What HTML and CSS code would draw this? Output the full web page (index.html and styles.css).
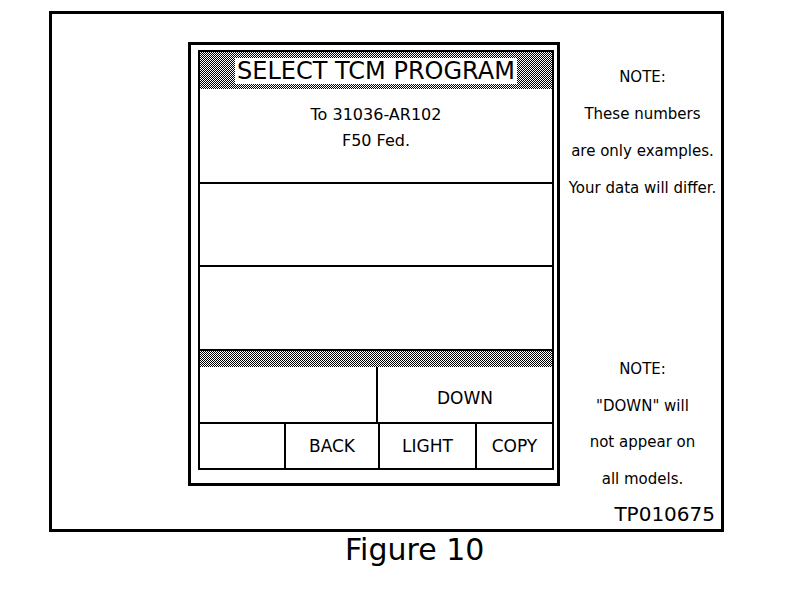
FILE: index.html
```html
<!DOCTYPE html>
<html lang="en">
<head>
  <meta charset="UTF-8">
  <title>Figure 10</title>
  <link rel="stylesheet" href="styles.css">
</head>
<body>

  <div class="frame">
    <div class="device">
      <div class="panel">
        <div class="header"><span class="title">SELECT TCM PROGRAM</span></div>
        <div class="row row-1">
          <div>To 31036-AR102</div>
          <div>F50 Fed.</div>
        </div>
        <div class="row row-2"></div>
        <div class="row row-3"></div>
        <div class="bar"></div>
        <div class="keys keys-top">
          <div class="key"></div>
          <div class="key">DOWN</div>
        </div>
        <div class="keys keys-bottom">
          <div class="key"></div>
          <div class="key">BACK</div>
          <div class="key">LIGHT</div>
          <div class="key">COPY</div>
        </div>
      </div>
    </div>

    <div class="notes">
      <div class="note note-first">
        <div>NOTE:</div>
        <div>These numbers</div>
        <div>are only examples.</div>
        <div>Your data will differ.</div>
      </div>
      <div class="note note-second">
        <div>NOTE:</div>
        <div>"DOWN" will</div>
        <div>not appear on</div>
        <div>all models.</div>
      </div>
      <div class="code">TP010675</div>
    </div>
  </div>

  <div class="caption">Figure 10</div>

</body>
</html>
```

FILE: styles.css
```css
body {
  margin: 0;
  font-family: "DejaVu Sans", sans-serif;
  background-color: white;
  color: black;
}

.frame {
  margin: 11px 0 0 49px;
  width: 669px;
  height: 515px;
  border: 3px solid black;
  display: flex;
}

.device {
  margin: 28px 0 0 136px;
  width: 356px;
  height: 420px;
  flex-shrink: 0;
  border: 3px solid black;
  padding: 5px 3px 13px 7px;
  display: flex;
}

.panel {
  flex: 1;
  border: 2px solid black;
  display: flex;
  flex-direction: column;
}

.header,
.bar {
  background: repeating-conic-gradient(#000 0 25%, #fff 0 50%) 0 0 / 2px 2px;
}

.header {
  height: 37px;
  display: flex;
  align-items: center;
  justify-content: center;
}

.title {
  background-color: white;
  font-size: 24px;
  line-height: 24px;
  padding: 1px 2px;
}

.row {
  border-bottom: 2px solid black;
  box-sizing: border-box;
}

.row-1 {
  height: 95px;
  padding-top: 13px;
  text-align: center;
  font-size: 16px;
  line-height: 26px;
}

.row-2 {
  height: 83px;
}

.row-3 {
  height: 84px;
}

.bar {
  height: 16px;
}

.keys {
  display: flex;
  font-size: 17px;
}

.keys-top {
  height: 57px;
  border-bottom: 2px solid black;
  box-sizing: border-box;
}

.keys-bottom {
  flex: 1;
}

.key {
  display: flex;
  align-items: center;
  justify-content: center;
  border-left: 2px solid black;
}

.keys-top .key {
  padding-top: 6px;
}

.key:first-child {
  border-left: none;
}

.keys-top .key:nth-child(1) { width: 176px; }
.keys-top .key:nth-child(2) { flex: 1; }

.keys-bottom .key:nth-child(1) { width: 84px; }
.keys-bottom .key:nth-child(2) { width: 92px; }
.keys-bottom .key:nth-child(3) { width: 95px; }
.keys-bottom .key:nth-child(4) { flex: 1; }

.notes {
  flex: 1;
  display: flex;
  flex-direction: column;
  align-items: center;
  padding: 45px 0 5px 4px;
  font-size: 15px;
  white-space: nowrap;
}

.note {
  text-align: center;
}

.note-first {
  line-height: 37px;
}

.note-second {
  margin-top: 144px;
  line-height: 36.5px;
}

.code {
  margin-top: auto;
  margin-right: 6px;
  align-self: flex-end;
  font-size: 20px;
  line-height: 20px;
}

.caption {
  padding-left: 345px;
  font-size: 30px;
  line-height: 36px;
}
```
